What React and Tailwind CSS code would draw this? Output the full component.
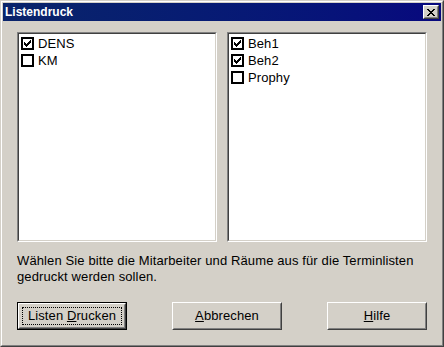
import React from 'react';

const CHECK = [
  [6, 0], [5, 1], [6, 1], [0, 2], [4, 2], [5, 2], [6, 2],
  [0, 3], [1, 3], [3, 3], [4, 3], [5, 3],
  [0, 4], [1, 4], [2, 4], [3, 4], [4, 4],
  [1, 5], [2, 5], [3, 5], [2, 6],
];

const CLOSE_X = [
  [0, 0], [1, 0], [6, 0], [7, 0],
  [1, 1], [2, 1], [5, 1], [6, 1],
  [2, 2], [3, 2], [4, 2], [5, 2],
  [3, 3], [4, 3],
  [2, 4], [3, 4], [4, 4], [5, 4],
  [1, 5], [2, 5], [5, 5], [6, 5],
  [0, 6], [1, 6], [6, 6], [7, 6],
];

const CheckBox = ({ checked }) => (
  <svg width="13" height="13" viewBox="0 0 13 13" shapeRendering="crispEdges" className="shrink-0">
    <rect x="0" y="0" width="13" height="13" fill="#000" />
    <rect x="2" y="2" width="9" height="9" fill="#fff" />
    {checked &&
      CHECK.map(([x, y]) => <rect key={`${x}-${y}`} x={x + 3} y={y + 3} width="1" height="1" fill="#000" />)}
  </svg>
);

const ListBox = ({ items }) => (
  <div className="w-[200px] h-[210px] border border-t-[#808080] border-l-[#808080] border-r-white border-b-white">
    <div className="w-full h-full bg-white border border-t-[#404040] border-l-[#404040] border-r-[#d4d0c8] border-b-[#d4d0c8] pt-[1px] pl-[2px]">
      {items.map((item) => (
        <div key={item.label} className="flex items-center gap-[4px] h-[17px]">
          <CheckBox checked={item.checked} />
          <span className="text-[13px] leading-[16px] tracking-[0.1px] text-black">{item.label}</span>
        </div>
      ))}
    </div>
  </div>
);

const Button = ({ width, isDefault, children }) => (
  <div className={`${width} h-[28px] ${isDefault ? 'border border-black' : ''}`}>
    <div className="w-full h-full border border-t-white border-l-white border-r-[#404040] border-b-[#404040]">
      <div className="w-full h-full border border-t-[#d4d0c8] border-l-[#d4d0c8] border-r-[#808080] border-b-[#808080] flex items-center justify-center p-[2px]">
        <div className={`w-full h-full flex items-center justify-center text-[13px] tracking-[0.1px] text-black ${isDefault ? 'border border-dotted border-black' : ''}`}>
          {children}
        </div>
      </div>
    </div>
  </div>
);

export default function App() {
  return (
    <div
      className="w-[444px] h-[347px] bg-[#d4d0c8] border border-t-[#d4d0c8] border-l-[#d4d0c8] border-r-[#404040] border-b-[#404040]"
      style={{ fontFamily: '"Liberation Sans", Arial, sans-serif' }}
    >
      <div className="w-full h-full border border-t-white border-l-white border-r-[#808080] border-b-[#808080] p-[1px] flex flex-col">
        <div className="h-[18px] flex items-center justify-between bg-gradient-to-r from-[#0a246a] to-[#08087e] pl-[2px] pr-[2px]">
          <span className="text-white font-bold text-[12px] leading-none">Listendruck</span>
          <div className="w-[16px] h-[14px] border border-t-white border-l-white border-r-[#404040] border-b-[#404040]">
            <div className="w-full h-full bg-[#d4d0c8] border border-t-[#d4d0c8] border-l-[#d4d0c8] border-r-[#808080] border-b-[#808080] flex items-center justify-center">
              <svg width="8" height="7" viewBox="0 0 8 7" shapeRendering="crispEdges">
                {CLOSE_X.map(([x, y]) => <rect key={`${x}-${y}`} x={x} y={y} width="1" height="1" fill="#000" />)}
              </svg>
            </div>
          </div>
        </div>

        <div className="flex flex-col pl-[14px] pr-[14px] pt-[11px]">
          <div className="flex gap-[10px]">
            <ListBox items={[{ label: 'DENS', checked: true }, { label: 'KM', checked: false }]} />
            <ListBox
              items={[
                { label: 'Beh1', checked: true },
                { label: 'Beh2', checked: true },
                { label: 'Prophy', checked: false },
              ]}
            />
          </div>

          <p className="mt-[11px] text-[13px] leading-[16px] tracking-[0.12px] text-black">
            Wählen Sie bitte die Mitarbeiter und Räume aus für die Terminlisten
            <br />
            gedruckt werden sollen.
          </p>

          <div className="flex justify-between mt-[17px] w-[410px]">
            <Button width="w-[110px]" isDefault>
              <span>
                Listen <span className="underline">D</span>rucken
              </span>
            </Button>
            <Button width="w-[110px]">
              <span>
                <span className="underline">A</span>bbrechen
              </span>
            </Button>
            <Button width="w-[100px]">
              <span>
                <span className="underline">H</span>ilfe
              </span>
            </Button>
          </div>
        </div>
      </div>
    </div>
  );
}
